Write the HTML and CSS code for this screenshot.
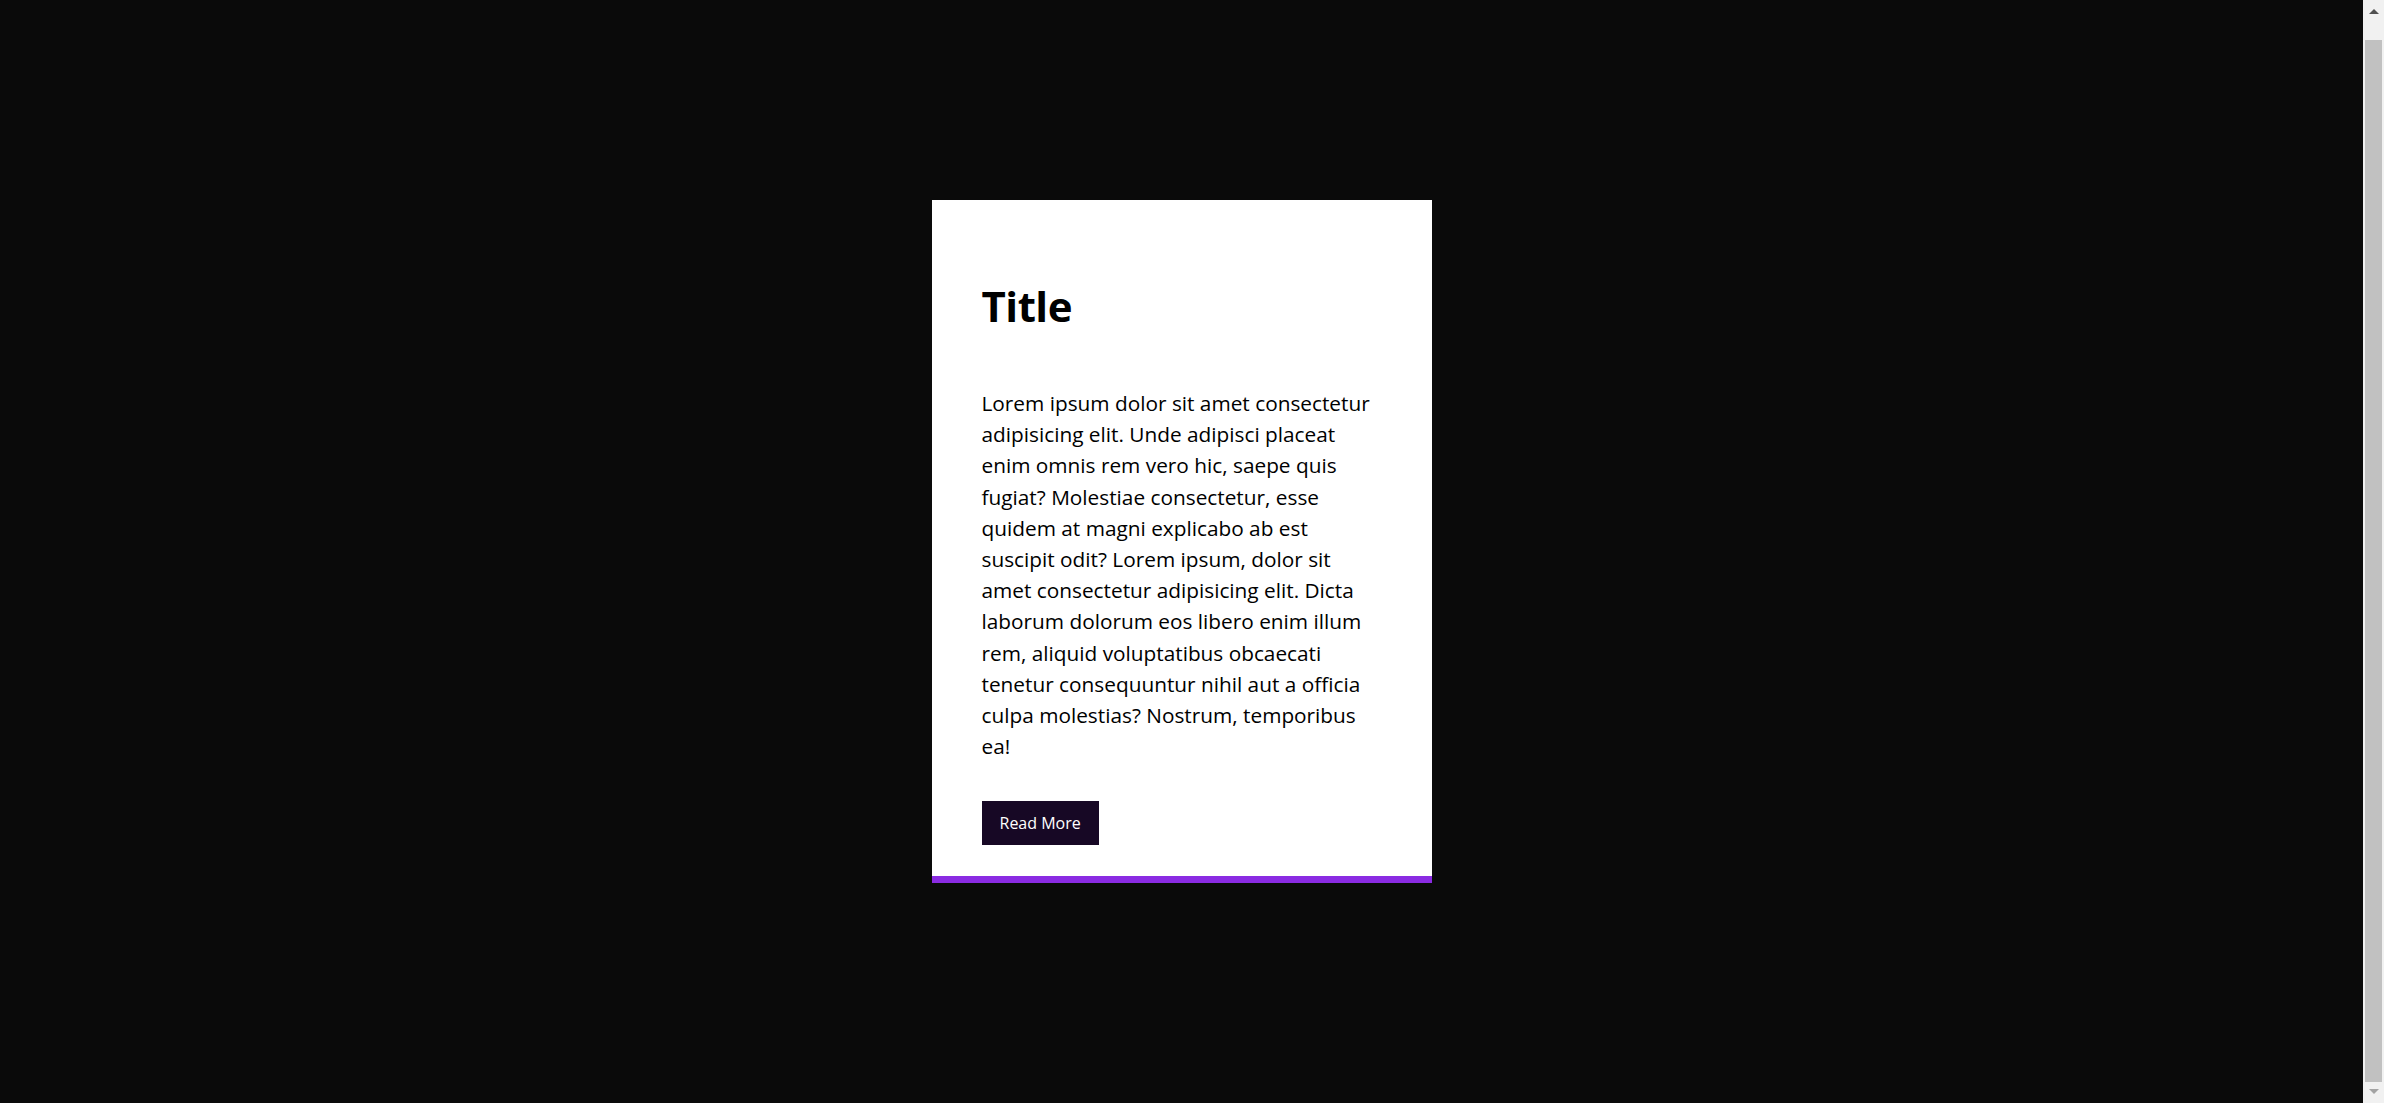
FILE: index.html
```html
<!DOCTYPE html>
<html lang="en">
<head>
<meta charset="utf-8">
<title>Card</title>
<link rel="stylesheet" href="styles.css">
</head>
<body>
  <div class="card">
    <h1 class="card-title">Title</h1>
    <p class="card-text">Lorem ipsum dolor sit amet consectetur adipisicing elit. Unde adipisci placeat enim omnis rem vero hic, saepe quis fugiat? Molestiae consectetur, esse quidem at magni explicabo ab est suscipit odit? Lorem ipsum, dolor sit amet consectetur adipisicing elit. Dicta laborum dolorum eos libero enim illum rem, aliquid voluptatibus obcaecati tenetur consequuntur nihil aut a officia culpa molestias? Nostrum, temporibus ea!</p>
    <a class="card-btn" href="#">Read More</a>
  </div>
  <div class="scrollbar" aria-hidden="true">
    <span class="sb-arrow sb-up"></span>
    <span class="sb-thumb"></span>
    <span class="sb-arrow sb-down"></span>
  </div>
</body>
</html>
```
FILE: styles.css
```css
html, body {
  background: #0a0a0a;
}
body {
  margin: 8px 29px 8px 8px;
  display: flex;
  justify-content: center;
  align-items: flex-start;
  font-family: "Open Sans", "Noto Sans", sans-serif;
}
.card {
  margin-top: 192px;
  width: 500px;
  box-sizing: border-box;
  background: #ffffff;
  padding: 50px 50px 31px;
  border-bottom: 7px solid #8a2be2;
  display: flex;
  flex-direction: column;
  align-items: flex-start;
}
.card-title {
  margin: 30px 0 0;
  font-size: 42px;
  line-height: 52px;
  font-weight: 700;
  letter-spacing: -0.5px;
  color: #000;
}
.card-text {
  margin: 56px 0 0;
  font-size: 20.8px;
  line-height: 31.2px;
  color: #000;
}
.card-btn {
  margin-top: 39px;
  display: inline-block;
  background: #170825;
  color: #ffffff;
  text-decoration: none;
  font-size: 16px;
  line-height: 20px;
  padding: 12px 18px;
}

/* window scrollbar chrome */
.scrollbar {
  position: fixed;
  top: 0;
  right: 0;
  width: 21px;
  height: 100vh;
  background: #f1f1f1;
  display: flex;
  flex-direction: column;
  align-items: center;
  box-sizing: border-box;
  padding: 9px 0 9px;
}
.sb-arrow {
  width: 0;
  height: 0;
  border-left: 5px solid transparent;
  border-right: 5px solid transparent;
}
.sb-up {
  border-bottom: 5px solid #505050;
}
.sb-down {
  border-top: 5px solid #a3a3a3;
}
.sb-thumb {
  width: 17px;
  flex: 1;
  margin: 26px 0 7px;
  background: #c1c1c1;
}
```
